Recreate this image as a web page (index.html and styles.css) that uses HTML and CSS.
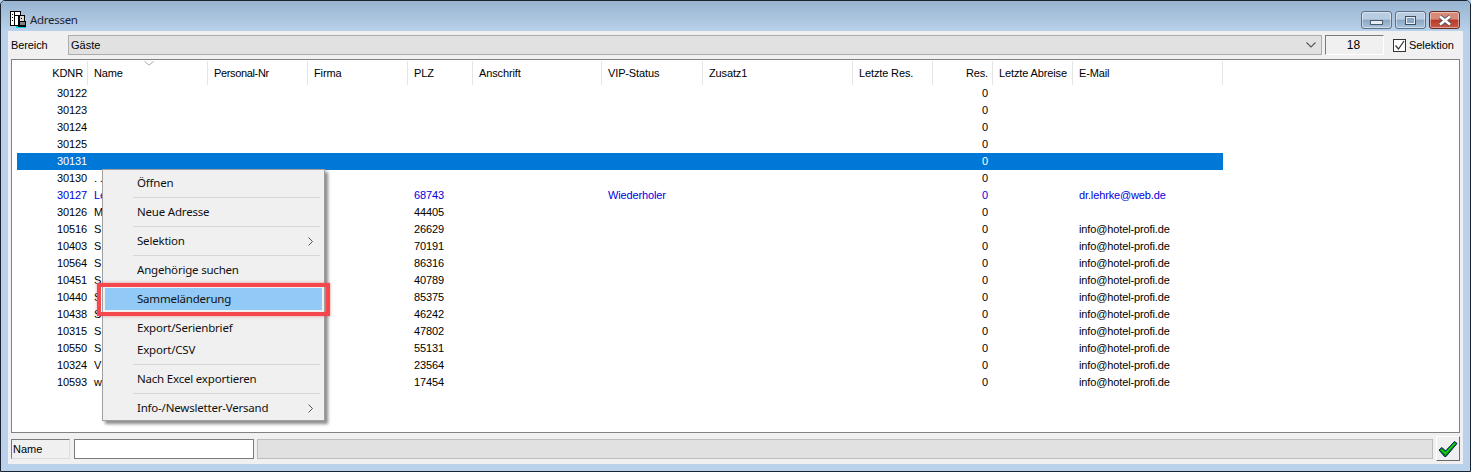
FILE: index.html
```html
<!DOCTYPE html>
<html lang="de">
<head>
<meta charset="utf-8">
<title>Adressen</title>
<link rel="stylesheet" href="styles.css">
</head>
<body>
<div class="window">
  <header class="titlebar">
    <svg class="app-icon" width="17" height="18" viewBox="0 0 17 18" shape-rendering="crispEdges"><path fill="#000" d="M0 1h11v15H0z"/><path fill="#fff" d="M1 2h3v13H1zM5 2h5v3H5z"/><path fill="#000" d="M2 4h1v1H2zM2 7h1v1H2zM2 10h1v1H2z"/><path fill="#000" d="M8 5h7v6h1v6H8z"/><path fill="#d8d8d8" d="M10 6h4v5h-4z"/><path fill="#808080" d="M10 12h5v3h-5z"/><path fill="#fff" d="M5 6h3v9H5z"/><path fill="#000" d="M11 8h1v1h-1z"/><path fill="#00d8d8" d="M6 16h2v2H6zM8 17h8v1H8z"/></svg>
    <span class="title-text">Adressen</span>
    <div class="win-buttons">
      <button class="win-btn win-min"><span class="min-glyph"></span></button>
      <button class="win-btn win-max"><span class="max-glyph"></span></button>
      <button class="win-btn win-close"><svg width="16" height="11" viewBox="0 0 16 11"><path d="M3 1.5 L13 9.5 M13 1.5 L3 9.5" stroke="#59525a" stroke-width="4.4"/><path d="M3 1.5 L13 9.5 M13 1.5 L3 9.5" stroke="#fff" stroke-width="2.6"/></svg></button>
    </div>
  </header>
  <main class="content">
    <div class="toolbar">
      <span class="label">Bereich</span>
      <div class="combo"><span>Gäste</span><svg width="10" height="6" viewBox="0 0 10 6"><path d="M0.5 0.5 L5 5 L9.5 0.5" fill="none" stroke="#555" stroke-width="1.1"/></svg></div>
      <div class="count">18</div>
      <label class="check"><span class="box"><svg width="11" height="11" viewBox="0 0 11 11"><path d="M1.5 5.5 L4.5 9 L10 1" fill="none" stroke="#333" stroke-width="1.2"/></svg></span>Selektion</label>
    </div>
    <div class="list">
      <div class="row head">
        <span class="c r hk">KDNR<i class="sep"></i></span><span class="c">Name<svg class="sort" width="10" height="5" viewBox="0 0 10 5"><path d="M0.5 0.5 L5 4 L9.5 0.5" fill="none" stroke="#aaa"/></svg><i class="sep"></i></span><span class="c pn">Personal-Nr<i class="sep"></i></span><span class="c">Firma<i class="sep"></i></span><span class="c">PLZ<i class="sep"></i></span><span class="c">Anschrift<i class="sep"></i></span><span class="c">VIP-Status<i class="sep"></i></span><span class="c">Zusatz1<i class="sep"></i></span><span class="c">Letzte Res.<i class="sep"></i></span><span class="c r">Res.<i class="sep"></i></span><span class="c">Letzte Abreise<i class="sep"></i></span><span class="c">E-Mail<i class="sep"></i></span>
      </div>
      <div class="row"><span class="c r k">30122</span><span class="c"></span><span class="c"></span><span class="c"></span><span class="c"></span><span class="c"></span><span class="c"></span><span class="c"></span><span class="c"></span><span class="c r">0</span><span class="c"></span><span class="c"></span></div>
      <div class="row"><span class="c r k">30123</span><span class="c"></span><span class="c"></span><span class="c"></span><span class="c"></span><span class="c"></span><span class="c"></span><span class="c"></span><span class="c"></span><span class="c r">0</span><span class="c"></span><span class="c"></span></div>
      <div class="row"><span class="c r k">30124</span><span class="c"></span><span class="c"></span><span class="c"></span><span class="c"></span><span class="c"></span><span class="c"></span><span class="c"></span><span class="c"></span><span class="c r">0</span><span class="c"></span><span class="c"></span></div>
      <div class="row"><span class="c r k">30125</span><span class="c"></span><span class="c"></span><span class="c"></span><span class="c"></span><span class="c"></span><span class="c"></span><span class="c"></span><span class="c"></span><span class="c r">0</span><span class="c"></span><span class="c"></span></div>
      <div class="row selected"><span class="c r k">30131</span><span class="c"></span><span class="c"></span><span class="c"></span><span class="c"></span><span class="c"></span><span class="c"></span><span class="c"></span><span class="c"></span><span class="c r">0</span><span class="c"></span><span class="c"></span></div>
      <div class="row"><span class="c r k">30130</span><span class="c">. .</span><span class="c"></span><span class="c"></span><span class="c"></span><span class="c"></span><span class="c"></span><span class="c"></span><span class="c"></span><span class="c r">0</span><span class="c"></span><span class="c"></span></div>
      <div class="row blue"><span class="c r k">30127</span><span class="c">Le</span><span class="c"></span><span class="c"></span><span class="c">68743</span><span class="c"></span><span class="c">Wiederholer</span><span class="c"></span><span class="c"></span><span class="c r">0</span><span class="c"></span><span class="c">dr.lehrke@web.de</span></div>
      <div class="row"><span class="c r k">30126</span><span class="c">M</span><span class="c"></span><span class="c"></span><span class="c">44405</span><span class="c"></span><span class="c"></span><span class="c"></span><span class="c"></span><span class="c r">0</span><span class="c"></span><span class="c"></span></div>
      <div class="row"><span class="c r k">10516</span><span class="c">S</span><span class="c"></span><span class="c"></span><span class="c">26629</span><span class="c"></span><span class="c"></span><span class="c"></span><span class="c"></span><span class="c r">0</span><span class="c"></span><span class="c">info@hotel-profi.de</span></div>
      <div class="row"><span class="c r k">10403</span><span class="c">S</span><span class="c"></span><span class="c"></span><span class="c">70191</span><span class="c"></span><span class="c"></span><span class="c"></span><span class="c"></span><span class="c r">0</span><span class="c"></span><span class="c">info@hotel-profi.de</span></div>
      <div class="row"><span class="c r k">10564</span><span class="c">S</span><span class="c"></span><span class="c"></span><span class="c">86316</span><span class="c"></span><span class="c"></span><span class="c"></span><span class="c"></span><span class="c r">0</span><span class="c"></span><span class="c">info@hotel-profi.de</span></div>
      <div class="row"><span class="c r k">10451</span><span class="c">S</span><span class="c"></span><span class="c"></span><span class="c">40789</span><span class="c"></span><span class="c"></span><span class="c"></span><span class="c"></span><span class="c r">0</span><span class="c"></span><span class="c">info@hotel-profi.de</span></div>
      <div class="row"><span class="c r k">10440</span><span class="c">S</span><span class="c"></span><span class="c"></span><span class="c">85375</span><span class="c"></span><span class="c"></span><span class="c"></span><span class="c"></span><span class="c r">0</span><span class="c"></span><span class="c">info@hotel-profi.de</span></div>
      <div class="row"><span class="c r k">10438</span><span class="c">S</span><span class="c"></span><span class="c"></span><span class="c">46242</span><span class="c"></span><span class="c"></span><span class="c"></span><span class="c"></span><span class="c r">0</span><span class="c"></span><span class="c">info@hotel-profi.de</span></div>
      <div class="row"><span class="c r k">10315</span><span class="c">S</span><span class="c"></span><span class="c"></span><span class="c">47802</span><span class="c"></span><span class="c"></span><span class="c"></span><span class="c"></span><span class="c r">0</span><span class="c"></span><span class="c">info@hotel-profi.de</span></div>
      <div class="row"><span class="c r k">10550</span><span class="c">S</span><span class="c"></span><span class="c"></span><span class="c">55131</span><span class="c"></span><span class="c"></span><span class="c"></span><span class="c"></span><span class="c r">0</span><span class="c"></span><span class="c">info@hotel-profi.de</span></div>
      <div class="row"><span class="c r k">10324</span><span class="c">V</span><span class="c"></span><span class="c"></span><span class="c">23564</span><span class="c"></span><span class="c"></span><span class="c"></span><span class="c"></span><span class="c r">0</span><span class="c"></span><span class="c">info@hotel-profi.de</span></div>
      <div class="row"><span class="c r k">10593</span><span class="c">w</span><span class="c"></span><span class="c"></span><span class="c">17454</span><span class="c"></span><span class="c"></span><span class="c"></span><span class="c"></span><span class="c r">0</span><span class="c"></span><span class="c">info@hotel-profi.de</span></div>
    </div>
    <div class="statusbar">
      <div class="status-label">Name</div>
      <input class="status-input" type="text">
      <div class="status-bar"></div>
      <button class="ok-btn"><svg width="20" height="18" viewBox="0 0 20 18"><path d="M1 10 L4 7.5 L7.5 11 L16.5 1.5 L19 3.5 L8 16.5 L6.5 16.5 Z" fill="#008a00" stroke="#00107a" stroke-width="1"/><path d="M3 9.5 L7.5 13.5 L17 3" fill="none" stroke="#18d018" stroke-width="1.6"/></svg></button>
    </div>
  </main>
</div>
<nav class="menu">
  <div class="mi">Öffnen</div>
  <div class="ms"></div>
  <div class="mi">Neue Adresse</div>
  <div class="ms"></div>
  <div class="mi">Selektion<svg class="arrow" width="5" height="9" viewBox="0 0 5 9"><path d="M0.5 0.5 L4.5 4.5 L0.5 8.5" fill="none" stroke="#555"/></svg></div>
  <div class="ms"></div>
  <div class="mi">Angehörige suchen</div>
  <div class="ms"></div>
  <div class="mi hot">Sammeländerung</div>
  <div class="ms"></div>
  <div class="mi">Export/Serienbrief</div>
  <div class="mi">Export/CSV</div>
  <div class="ms"></div>
  <div class="mi">Nach Excel exportieren</div>
  <div class="ms"></div>
  <div class="mi">Info-/Newsletter-Versand<svg class="arrow" width="5" height="9" viewBox="0 0 5 9"><path d="M0.5 0.5 L4.5 4.5 L0.5 8.5" fill="none" stroke="#555"/></svg></div>
</nav>
<div class="callout"></div>
</body>
</html>
```
FILE: styles.css
```css
* { box-sizing: border-box; }
html, body { margin: 0; height: 472px; overflow: hidden; background: #b9d1ea; }
body { font: 11px/1 "Liberation Sans", Arial, sans-serif; color: #000; position: relative; }

.window {
  height: 472px;
  display: flex;
  flex-direction: column;
  border: 1px solid #1a2430;
  border-radius: 5px 5px 0 0;
  background: #b9d1ea;
}
.titlebar {
  height: 30px;
  flex: none;
  display: flex;
  align-items: flex-start;
  padding: 9px 2px 0 9px;
  background: linear-gradient(#98b4d0, #b9d1ea);
  border-radius: 4px 4px 0 0;
}
.app-icon { margin-right: 3px; }
.title-text { font: 11.5px/20px "Noto Sans", sans-serif; letter-spacing: -0.3px; color: #1c2530; }
.win-buttons { margin-left: auto; display: flex; gap: 3px; margin-right: 8px; margin-top: 1px; }
.win-btn {
  width: 31px; height: 18px; padding: 0;
  border: 1px solid #5a7088; border-radius: 3px;
  background: linear-gradient(#b8cde2 0 45%, #8aa6c2 50%, #a8c4de);
  display: flex; align-items: center; justify-content: center;
  box-shadow: inset 0 0 0 1px rgba(255,255,255,.45);
}
.win-close { background: linear-gradient(#d88a78 0 45%, #b83a28 50%, #c85a48); border-color: #6a2a20; }
.min-glyph { width: 13px; height: 5px; margin-top: 4px; background: #e8eef4; border: 1px solid #4a5a6a; }
.max-glyph { width: 11px; height: 9px; background: #8aa6c2; border: 1px solid #3e4e60; box-shadow: inset 0 0 0 1px #e8eef4; }

.content {
  flex: none;
  height: 433px;
  margin: 0 7px;
  background: #f0f0f0;
  padding: 4px 3px 0;
  display: flex;
  flex-direction: column;
}
.toolbar { display: flex; align-items: center; height: 20px; }
.label { width: 57px; font-size: 11px; letter-spacing: -0.1px; }
.combo {
  width: 1254px; height: 20px;
  background: #e1e1e1; border: 1px solid #adadad;
  display: flex; align-items: center; justify-content: space-between;
  padding: 0 5px 0 2px;
}
.count {
  margin-left: 3px; width: 59px; height: 20px;
  border: 1px solid; border-color: #7a7a7a #fff #fff #7a7a7a;
  display: flex; align-items: center; justify-content: center; font-size: 12px;
  padding-right: 2px;
}
.check { margin-left: 9px; display: flex; align-items: center; gap: 3px; letter-spacing: -0.05px; }
.box { width: 13px; height: 13px; border: 1px solid #333; background: #fff; display: flex; align-items: center; justify-content: center; }

.list {
  margin-top: 4px;
  height: 374px;
  background: #fff;
  border: 1px solid #828282;
  padding: 1px 5px 0;
}
.row {
  display: grid;
  grid-template-columns: 71px 120px 100px 100px 65px 129px 101px 150px 80px 60px 80px 150px;
  width: 1206px;
  height: 17px;
  line-height: 17px;
  white-space: nowrap;
  letter-spacing: -0.13px;
}
.row.head { height: 24px; line-height: 24px; }
.c { position: relative; padding-left: 6px; overflow: visible; }
.c.r { text-align: right; padding: 0 5px 0 0; }
.c.k { padding-right: 1px; }
.pn { letter-spacing: -0.35px; }
.sep { position: absolute; right: 0; top: 0; bottom: 0; width: 1px; background: #e5e5e5; }
.sort { position: absolute; left: 56px; top: 0; }
.selected { background: #0078d7; color: #fff; }
.blue { color: #0000e0; }

.statusbar { display: flex; align-items: center; gap: 3px; height: 25px; margin-top: 3px; }
.status-label {
  width: 59px; height: 20px; padding: 0 0 0 1px; line-height: 19px;
  border: 1px solid; border-color: #7a7a7a #dcdcdc #dcdcdc #7a7a7a;
}
.status-input { width: 180px; height: 20px; margin: 0 0 0 1px; padding: 0; background: #fff; border: 1px solid #7a7a7a; border-radius: 0; outline: 0; }
.status-bar { width: 1176px; height: 20px; background: #e1e1e1; border: 1px solid #bcbcbc; }
.ok-btn {
  width: 24px; height: 25px; padding: 0;
  background: #f0f0f0; border: 1px solid; border-color: #fff #6a6a6a #6a6a6a #fff;
  display: flex; align-items: center; justify-content: center;
}

.menu {
  position: absolute; left: 102px; top: 169px; width: 223px; height: 252px;
  background: #f0f0f0; border: 1px solid #a0a0a0;
  padding: 2px;
  font: 11.5px/22px "Noto Sans", sans-serif;
  box-shadow: 3px 3px 3px rgba(0,0,0,.45);
}
.mi { height: 22px; padding-left: 32px; position: relative; color: #111; letter-spacing: -0.2px; }
.hot { background: #91c9f7; }
.ms { height: 7px; margin-left: 28px; margin-right: 2px; position: relative; }
.ms::after { content: ""; position: absolute; left: 0; right: 0; top: 3px; height: 1px; background: #d7d7d7; }
.arrow { position: absolute; right: 9px; top: 7px; }
.callout {
  position: absolute; left: 97px; top: 283px; width: 233px; height: 33px;
  border: 4px solid #f5484c;
  box-shadow: 0 0 3px rgba(200,60,60,.5);
}
```
